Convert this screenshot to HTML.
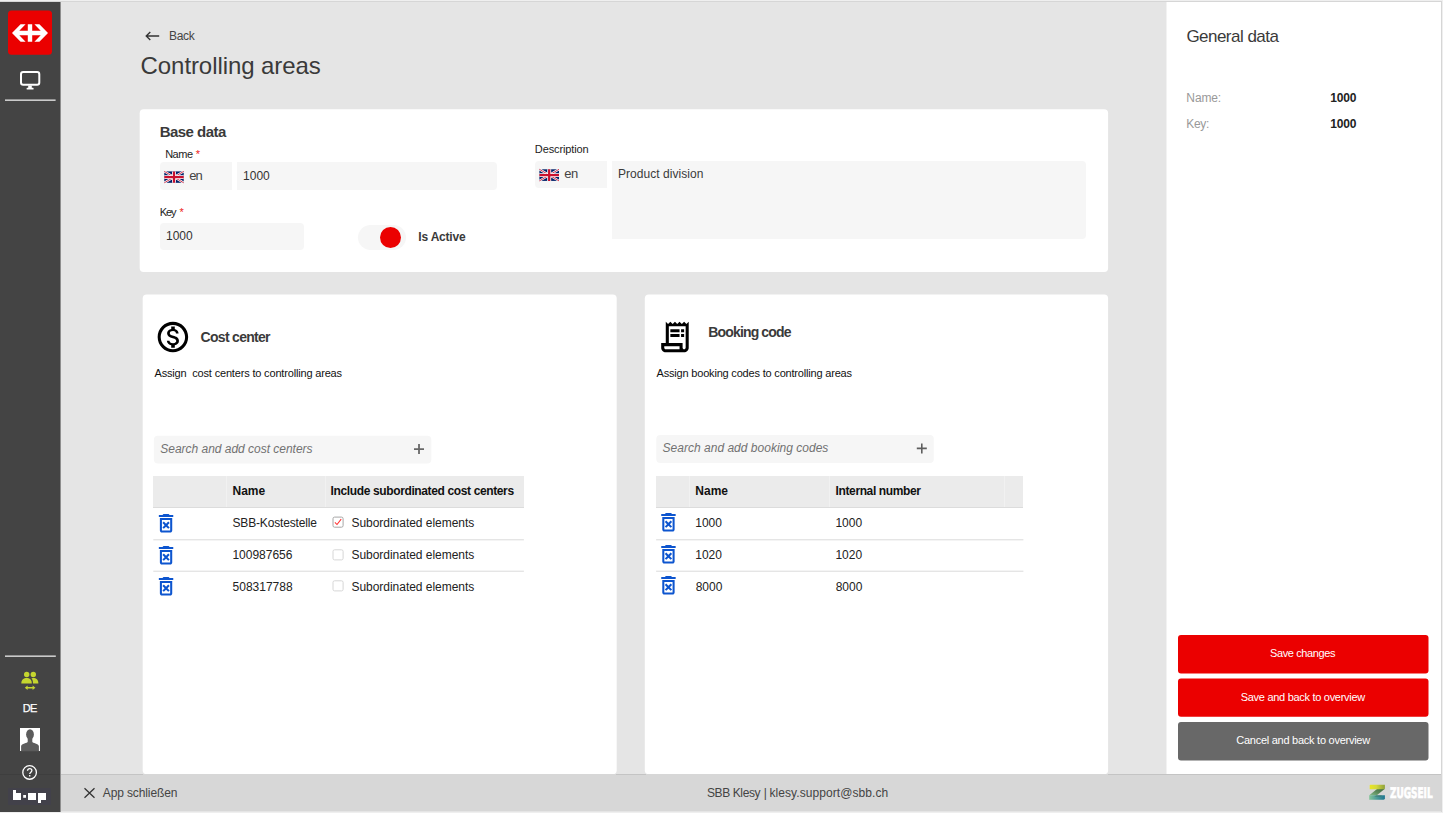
<!DOCTYPE html>
<html lang="en">
<head>
<meta charset="utf-8">
<title>Controlling areas</title>
<style>
*{box-sizing:border-box;margin:0;padding:0}
html,body{width:1443px;height:813px;overflow:hidden;background:#efefef;font-family:"Liberation Sans",sans-serif}
#app{position:absolute;left:0;top:0;width:1443px;height:813px;overflow:hidden}
.a{position:absolute}
.t{position:absolute;white-space:pre;line-height:20px;font-family:"Liberation Sans",sans-serif}
.inp{position:absolute;background:#f6f6f6;border-radius:4px}
.hdr{position:absolute;background:#ebebeb;height:32.2px;top:476.1px;border-bottom:1px solid #dcdcdc}
.sep{position:absolute;width:1px;top:476.1px;height:31px;background:#f1f1f1}
svg{position:absolute;overflow:visible}
</style>
</head>
<body>
<div id="app">
<!-- frame -->
<div class="a" style="left:0;top:1px;width:1442px;height:811px;background:#d6d6d6"></div>
<div class="a" id="main" style="left:0;top:2px;width:1441px;height:810px;background:#e5e5e5"></div>

<!-- sidebar -->
<div class="a" style="left:0;top:2px;width:61px;height:810px;background:#8e8e8e"></div>
<div class="a" style="left:0;top:2px;width:60px;height:810px;background:#444"></div>
<div class="a" style="left:0;top:774px;width:60px;height:1px;background:#3e3e3e"></div>
<svg style="left:0;top:0" width="1443" height="813" viewBox="0 0 1443 813"><svg x="8" y="10" width="44" height="46" viewBox="0 0 44 46">
<rect x="0" y="0.45" width="44" height="44.3" rx="3.5" fill="#eb0000"/>
<path fill="#fff" transform="translate(0,0.75)" d="M4 22.3 L12.6 13.6 H17.6 L11.3 20.1 H19.8 V13.6 H24.2 V20.1 H32.7 L26.4 13.6 H31.4 L40 22.3 L31.4 31 H26.4 L32.7 24.6 H24.2 V31 H19.8 V24.6 H11.3 L17.6 31 H12.6 Z"/>
</svg></svg>
<!-- monitor -->
<svg style="left:0;top:0" width="1443" height="813" viewBox="0 0 1443 813"><svg x="18" y="68" width="24" height="24" viewBox="0 0 24 24">
<rect x="3" y="4" width="18.3" height="12.8" rx="2.2" fill="none" stroke="#fff" stroke-width="2"/>
<rect x="10.2" y="17.5" width="3.6" height="2.6" fill="#fff"/>
<rect x="8.6" y="19.8" width="7" height="1.7" rx=".6" fill="#fff"/>
</svg></svg>

<svg style="left:0;top:0" width="61" height="813" viewBox="0 0 61 813"><rect x="5" y="99.45" width="50.6" height="1.45" fill="#dadada"/><rect x="5" y="655.45" width="50.8" height="1.45" fill="#dadada"/></svg>
<!-- people -->
<svg style="left:0;top:0" width="1443" height="813" viewBox="0 0 1443 813"><svg x="18" y="668" width="24" height="24" viewBox="0 0 24 24" fill="#c5d62f">
<circle cx="8.7" cy="6.5" r="2.7"/><circle cx="15.3" cy="6.5" r="2.7"/>
<path d="M3.3 15.4 C3.3 11.6 5.8 10 8.7 10 C11.6 10 13.8 11.6 13.8 15.4 Z"/>
<path d="M14.6 10.1 C17.8 9.8 20.4 11.6 20.4 15.4 H15 C15 13 14.6 11.4 13.4 10.4 Z"/>
<path d="M6.8 19.7 L9.6 17.4 V19 H14.6 V17.4 L17.4 19.7 L14.6 22 V20.4 H9.6 V22 Z"/>
</svg></svg>
<!-- avatar -->
<div class="a" style="left:19.7px;top:727.8px;width:20.2px;height:23.4px;background:#fff"></div>
<svg style="left:0;top:0" width="1443" height="813" viewBox="0 0 1443 813"><svg x="19.7" y="727.8" width="20.2" height="23.4" viewBox="0 0 20.2 23.4" fill="#5c5c5c">
<ellipse cx="10.3" cy="6.6" rx="3.9" ry="5.2"/>
<path d="M8 10 H12.6 V14 C12.6 15.4 19 15.6 19.2 18.4 V23.4 H1.4 V18.4 C1.6 15.6 8 15.4 8 14 Z"/>
</svg></svg>
<!-- help -->
<svg style="left:0;top:0" width="1443" height="813" viewBox="0 0 1443 813"><svg x="21.6" y="764.45" width="16" height="16" viewBox="0 0 16 16">
<circle cx="8" cy="8" r="6.8" fill="none" stroke="#fff" stroke-width="1.3"/>
<path d="M5.9 6.4 C5.9 4.9 6.9 4.2 8.1 4.2 C9.4 4.2 10.3 5 10.3 6.1 C10.3 7.6 8.2 7.8 8.1 9.6" fill="none" stroke="#fff" stroke-width="1.3"/>
<rect x="7.4" y="10.6" width="1.4" height="1.4" fill="#fff"/>
</svg></svg>
<!-- bap logo -->
<div class="a" style="left:7.5px;top:788px;width:43.5px;height:17px;background:#42414a"></div>
<svg style="left:0;top:773px" width="63" height="40" viewBox="0 0 63 40" fill="#fff">
<path d="M13 17 H16 V20 H21 V27 H13 Z"/>
<rect x="23.2" y="22" width="2.8" height="2.8"/>
<rect x="28" y="20" width="8" height="7"/>
<path d="M38 20 H46 V27 H41 V30 H38 Z"/>
</svg>

<!-- header -->
<svg style="left:0;top:0" width="1443" height="813" viewBox="0 0 1443 813"><svg x="145" y="29" width="16" height="14" viewBox="0 0 16 14">
<path d="M1.2 7 H14.2 M5.3 2.9 L1.2 7 L5.3 11.1" fill="none" stroke="#333" stroke-width="1.35"/>
</svg></svg>

<!-- base data card -->
<svg style="left:0;top:0" width="1443" height="813" viewBox="0 0 1443 813"><rect x="139.7" y="109.3" width="968.4" height="162.6" rx="4" fill="#fff"/><rect x="142.7" y="294.5" width="474" height="479.7" rx="4" fill="#fff"/><rect x="644.8" y="294.5" width="463.3" height="479.7" rx="4" fill="#fff"/></svg>
<div class="inp" style="left:160px;top:162.2px;width:72px;height:28px;border-radius:4px 0 0 4px"></div>
<div class="inp" style="left:237px;top:162.2px;width:259.5px;height:28px;border-radius:0 4px 4px 0"></div>
<div class="inp" style="left:160px;top:222.6px;width:144.3px;height:27.4px"></div>
<div class="inp" style="left:357.8px;top:225px;width:48.2px;height:25px;border-radius:13px"></div>
<div class="a" style="left:379.6px;top:227px;width:21px;height:21px;border-radius:50%;background:#eb0000"></div>
<div class="inp" style="left:535px;top:160.8px;width:72px;height:27.4px;border-radius:4px 0 0 4px"></div>
<div class="inp" style="left:612px;top:160.8px;width:474px;height:78.2px;border-radius:0 4px 4px 0"></div>
<!-- flags -->
<svg style="left:0;top:0" width="1443" height="813" viewBox="0 0 1443 813"><svg x="164.3" y="171.4" width="19.4" height="11.4" viewBox="0 0 60 36" preserveAspectRatio="none">
<rect width="60" height="36" fill="#012169"/>
<path d="M0 0 L60 36 M60 0 L0 36" stroke="#fff" stroke-width="7"/>
<path d="M0 0 L60 36 M60 0 L0 36" stroke="#c8102e" stroke-width="2.6"/>
<path d="M30 0 V36 M0 18 H60" stroke="#fff" stroke-width="12"/>
<path d="M30 0 V36 M0 18 H60" stroke="#c8102e" stroke-width="7"/>
</svg></svg>
<svg style="left:0;top:0" width="1443" height="813" viewBox="0 0 1443 813"><svg x="539.4" y="169.3" width="19.6" height="11.6" viewBox="0 0 60 36" preserveAspectRatio="none">
<rect width="60" height="36" fill="#012169"/>
<path d="M0 0 L60 36 M60 0 L0 36" stroke="#fff" stroke-width="7"/>
<path d="M0 0 L60 36 M60 0 L0 36" stroke="#c8102e" stroke-width="2.6"/>
<path d="M30 0 V36 M0 18 H60" stroke="#fff" stroke-width="12"/>
<path d="M30 0 V36 M0 18 H60" stroke="#c8102e" stroke-width="7"/>
</svg></svg>

<!-- cost center card -->

<svg style="left:0;top:0" width="1443" height="813" viewBox="0 0 1443 813"><svg x="154.6" y="318.8" width="36.6" height="36.6" viewBox="0 0 24 24" fill="#000">
<path d="M12 2C6.48 2 2 6.48 2 12s4.48 10 10 10 10-4.48 10-10S17.52 2 12 2zm0 18c-4.41 0-8-3.59-8-8s3.59-8 8-8 8 3.59 8 8-3.59 8-8 8zm.31-8.860c-1.770-.450-2.340-.940-2.340-1.670 0-.840.790-1.430 2.100-1.430 1.380 0 1.900.660 1.940 1.640h1.710c-.050-1.340-.870-2.570-2.490-2.970V5H10.900v1.690c-1.510.320-2.720 1.300-2.720 2.810 0 1.790 1.490 2.690 3.660 3.210 1.950.460 2.340 1.150 2.340 1.870 0 .530-.390 1.390-2.100 1.390-1.600 0-2.230-.720-2.320-1.640H8.040c.100 1.700 1.360 2.660 2.860 2.970V19h2.340v-1.670c1.520-.290 2.720-1.160 2.730-2.770-.010-2.200-1.900-2.960-3.660-3.420z"/>
</svg></svg>
<svg style="left:0;top:0" width="1443" height="813" viewBox="0 0 1443 813"><rect x="153.9" y="435.7" width="277.4" height="27.7" rx="4" fill="#f6f6f6"/></svg>
<svg style="left:0;top:0" width="1443" height="813" viewBox="0 0 1443 813"><svg x="413.5" y="443.6" width="11" height="11" viewBox="0 0 11 11"><path d="M5.5 0.5 V10.5 M0.5 5.5 H10.5" stroke="#686868" stroke-width="1.8" fill="none"/></svg></svg>
<div class="hdr" style="left:153.3px;width:370.6px"></div>
<div class="sep" style="left:226px"></div><div class="sep" style="left:324.5px"></div>
<svg style="left:0;top:0" width="1443" height="813" viewBox="0 0 1443 813"><svg x="153.7" y="510.83" width="24.7" height="24.7" viewBox="0 0 24 24" fill="#0d55cf"><path d="M14.120 10.470L12 12.590l-2.130-2.120-1.410 1.410L10.590 14l-2.120 2.120 1.410 1.410L12 15.410l2.120 2.120 1.410-1.410L13.410 14l2.120-2.120zM15.500 4l-1-1h-5l-1 1H5v2h14V4zM6 19c0 1.100.9 2 2 2h8c1.100 0 2-.9 2-2V7H6v12zM8 9h8v10H8V9z"/></svg></svg><svg style="left:0;top:0" width="1443" height="813" viewBox="0 0 1443 813"><svg x="153.7" y="542.83" width="24.7" height="24.7" viewBox="0 0 24 24" fill="#0d55cf"><path d="M14.120 10.470L12 12.590l-2.130-2.120-1.410 1.410L10.590 14l-2.120 2.120 1.410 1.410L12 15.410l2.120 2.120 1.410-1.410L13.410 14l2.120-2.120zM15.500 4l-1-1h-5l-1 1H5v2h14V4zM6 19c0 1.100.9 2 2 2h8c1.100 0 2-.9 2-2V7H6v12zM8 9h8v10H8V9z"/></svg></svg><svg style="left:0;top:0" width="1443" height="813" viewBox="0 0 1443 813"><svg x="153.7" y="573.83" width="24.7" height="24.7" viewBox="0 0 24 24" fill="#0d55cf"><path d="M14.120 10.470L12 12.590l-2.130-2.120-1.410 1.410L10.590 14l-2.120 2.120 1.410 1.410L12 15.410l2.120 2.120 1.410-1.410L13.410 14l2.120-2.120zM15.500 4l-1-1h-5l-1 1H5v2h14V4zM6 19c0 1.100.9 2 2 2h8c1.100 0 2-.9 2-2V7H6v12zM8 9h8v10H8V9z"/></svg></svg>
<svg style="left:0;top:0" width="1443" height="813" viewBox="0 0 1443 813">
<rect x="333" y="517.1" width="10.1" height="10.1" rx="1.6" fill="#fff" stroke="#a6a6a6" stroke-width="1"/>
<path d="M334.9 522.3 L337 524.5 L341.2 519.2" fill="none" stroke="#f33" stroke-width="1.05"/>
<rect x="333" y="549.8" width="10.1" height="10.1" rx="1.6" fill="#fff" stroke="#d6d6d6" stroke-width="1"/>
<rect x="333" y="580.8" width="10.1" height="10.1" rx="1.6" fill="#fff" stroke="#d6d6d6" stroke-width="1"/>
</svg>

<!-- booking card -->

<svg style="left:0;top:0" width="1443" height="813" viewBox="0 0 1443 813"><svg x="656.6" y="318.6" width="36.7" height="36.7" viewBox="0 0 24 24" fill="#000">
<path d="M19.500 3.500L18 2l-1.500 1.500L15 2l-1.500 1.500L12 2l-1.500 1.500L9 2 7.500 3.500 6 2v14H3v3c0 1.660 1.340 3 3 3h12c1.660 0 3-1.340 3-3V2l-1.500 1.500zM15 20H6c-.550 0-1-.450-1-1v-1h10v2zm4-1c0 .550-.450 1-1 1s-1-.450-1-1v-3H8V5h11v14z"/>
<path d="M9 7h6v2H9zM16 7h2v2h-2zM9 10h6v2H9zM16 10h2v2h-2z"/>
</svg></svg>
<svg style="left:0;top:0" width="1443" height="813" viewBox="0 0 1443 813"><rect x="656.3" y="434.9" width="277.5" height="28" rx="4" fill="#f6f6f6"/></svg>
<svg style="left:0;top:0" width="1443" height="813" viewBox="0 0 1443 813"><svg x="916.3" y="442.9" width="11" height="11" viewBox="0 0 11 11"><path d="M5.5 0.500 V10.5 M0.5 5.5 H10.5" stroke="#5e5e5e" stroke-width="1.6" fill="none"/></svg></svg>
<div class="hdr" style="left:656.100px;width:367.300px"></div>
<div class="sep" style="left:689px"></div><div class="sep" style="left:829px"></div><div class="sep" style="left:1004px"></div>
<svg style="left:0;top:0" width="1443" height="813" viewBox="0 0 1443 813"><svg x="656.1" y="509.83" width="24.7" height="24.7" viewBox="0 0 24 24" fill="#0d55cf"><path d="M14.120 10.470L12 12.590l-2.130-2.120-1.410 1.410L10.590 14l-2.120 2.120 1.410 1.410L12 15.410l2.120 2.120 1.410-1.410L13.410 14l2.120-2.120zM15.500 4l-1-1h-5l-1 1H5v2h14V4zM6 19c0 1.100.9 2 2 2h8c1.100 0 2-.9 2-2V7H6v12zM8 9h8v10H8V9z"/></svg></svg><svg style="left:0;top:0" width="1443" height="813" viewBox="0 0 1443 813"><svg x="656.1" y="541.83" width="24.7" height="24.7" viewBox="0 0 24 24" fill="#0d55cf"><path d="M14.120 10.470L12 12.590l-2.130-2.120-1.410 1.410L10.590 14l-2.120 2.120 1.410 1.410L12 15.410l2.120 2.120 1.410-1.410L13.410 14l2.120-2.120zM15.500 4l-1-1h-5l-1 1H5v2h14V4zM6 19c0 1.100.9 2 2 2h8c1.100 0 2-.9 2-2V7H6v12zM8 9h8v10H8V9z"/></svg></svg><svg style="left:0;top:0" width="1443" height="813" viewBox="0 0 1443 813"><svg x="656.1" y="572.83" width="24.7" height="24.7" viewBox="0 0 24 24" fill="#0d55cf"><path d="M14.120 10.470L12 12.590l-2.130-2.120-1.410 1.410L10.590 14l-2.120 2.120 1.410 1.410L12 15.410l2.120 2.120 1.410-1.410L13.410 14l2.120-2.120zM15.500 4l-1-1h-5l-1 1H5v2h14V4zM6 19c0 1.100.9 2 2 2h8c1.100 0 2-.9 2-2V7H6v12zM8 9h8v10H8V9z"/></svg></svg>

<!-- right panel -->
<svg style="left:0;top:0" width="1443" height="813" viewBox="0 0 1443 813"><rect x="1166.5" y="2" width="274.5" height="772" fill="#fff"/></svg>
<svg style="left:0;top:0" width="1443" height="813" viewBox="0 0 1443 813">
<rect x="153.3" y="539.3" width="370.6" height="1" fill="#dadada"/><rect x="153.3" y="570.7" width="370.6" height="1" fill="#dadada"/>
<rect x="656.1" y="539.3" width="367.3" height="1" fill="#dadada"/><rect x="656.1" y="570.7" width="367.3" height="1" fill="#dadada"/>
<rect x="1178" y="635" width="250.5" height="38.5" rx="3" fill="#eb0000"/>
<rect x="1178" y="678.6" width="250.5" height="38.2" rx="3" fill="#eb0000"/>
<rect x="1178" y="722" width="250.5" height="38.5" rx="3" fill="#686868"/>
</svg>

<!-- footer -->
<div class="a" style="left:61px;top:774px;width:1380px;height:37px;background:#d7d7d7"></div>
<div class="a" style="left:61px;top:774px;width:82px;height:1px;background:#c4c4c4"></div><div class="a" style="left:616px;top:774px;width:30px;height:1px;background:#c4c4c4"></div><div class="a" style="left:1108px;top:774px;width:333px;height:1px;background:#c4c4c4"></div>
<svg style="left:0;top:0" width="1443" height="813" viewBox="0 0 1443 813"><svg x="84" y="788" width="11" height="10" viewBox="0 0 11 10"><path d="M0.500 0.300 L10.500 9.700 M10.500 0.300 L0.500 9.700" stroke="#333" stroke-width="1.300" fill="none"/></svg></svg>
<!-- zugseil -->
<svg style="left:0;top:0" width="1443" height="813" viewBox="0 0 1443 813"><svg x="1369" y="784.5" width="17" height="16" viewBox="0 0 17 16">
<defs>
<linearGradient id="zg1" x1="0" y1="0" x2="1" y2="0"><stop offset="0" stop-color="#ebe624"/><stop offset=".45" stop-color="#d3d83a"/><stop offset="1" stop-color="#8ea03c"/></linearGradient>
<linearGradient id="zg2" x1="1" y1="0" x2="0" y2="1"><stop offset="0" stop-color="#3f6a44"/><stop offset=".5" stop-color="#5c8a5a"/><stop offset="1" stop-color="#86bc8e"/></linearGradient>
<linearGradient id="zg3" x1="0" y1="0" x2="1" y2="0"><stop offset="0" stop-color="#84c49a"/><stop offset=".5" stop-color="#4a9a98"/><stop offset="1" stop-color="#1e7590"/></linearGradient>
</defs>
<path d="M0.300 10.800 L8 4.500 H15.600 L7.600 11 Z" fill="url(#zg2)"/>
<path d="M1.300 0.300 H15.900 V4.100 Q15.900 4.700 15.200 4.700 H0.700 V1 Q0.700 0.300 1.300 0.300 Z" fill="url(#zg1)"/>
<path d="M0.200 10.800 H15.900 V14 Q15.600 15.300 14.300 15.300 H0.200 Z" fill="url(#zg3)"/>
<path d="M5.300 12.200 L7.600 10.800 H13 L12 12.200 Z" fill="#3d6f68" opacity=".55"/>
</svg></svg>
<svg id="zug" style="left:0;top:0" width="1443" height="813" viewBox="0 0 1443 813"><text transform="translate(1389.9,797.6) rotate(0.03) scale(0.498,0.735)" font-family="DejaVu Sans Condensed, DejaVu Sans, sans-serif" font-stretch="condensed" font-weight="700" font-size="20" fill="#fff" stroke="#fff" stroke-width=".9">ZUGSEIL</text></svg>

<span class="t" style="left:169px;top:26px;font-size:12px;color:#444;letter-spacing:-0.323px;">Back</span>
<span class="t" style="left:140.6px;top:56px;font-size:24px;color:#3a3a3a;letter-spacing:-0.082px;">Controlling areas</span>
<span class="t" style="left:159.69px;top:122px;font-size:15px;color:#3a3a3a;font-weight:700;letter-spacing:-0.528px;">Base data</span>
<span class="t" style="left:165.19px;top:144px;font-size:11px;color:#222;letter-spacing:-0.512px;">Name</span>
<span class="t" style="left:195.79px;top:144px;font-size:11px;color:#ee2222;">*</span>
<span class="t" style="left:189.14px;top:166px;font-size:13px;color:#444;letter-spacing:-0.954px;">en</span>
<span class="t" style="left:242.97px;top:166px;font-size:12px;color:#333;letter-spacing:0.03px;">1000</span>
<span class="t" style="left:159.64px;top:202px;font-size:11px;color:#222;letter-spacing:-0.989px;">Key</span>
<span class="t" style="left:179.4px;top:202px;font-size:11px;color:#ee2222;">*</span>
<span class="t" style="left:165.97px;top:226px;font-size:12px;color:#333;letter-spacing:0.024px;">1000</span>
<span class="t" style="left:418.37px;top:227px;font-size:12px;color:#3a3a3a;font-weight:700;letter-spacing:-0.204px;">Is Active</span>
<span class="t" style="left:534.83px;top:139px;font-size:11px;color:#222;letter-spacing:-0.117px;">Description</span>
<span class="t" style="left:564.14px;top:164px;font-size:13px;color:#444;letter-spacing:-0.454px;">en</span>
<span class="t" style="left:617.91px;top:164px;font-size:12px;color:#3a3a3a;letter-spacing:0.055px;">Product division</span>
<span class="t" style="left:200.62px;top:327px;font-size:14px;color:#3a3a3a;font-weight:700;letter-spacing:-0.71px;">Cost center</span>
<span class="t" style="left:154.52px;top:363px;font-size:11px;color:#111;letter-spacing:-0.172px;">Assign  cost centers to controlling areas</span>
<span class="t" style="left:160.24px;top:439px;font-size:12px;color:#727272;font-style:italic;letter-spacing:-0.016px;">Search and add cost centers</span>
<span class="t" style="left:232.54px;top:481px;font-size:12px;color:#111;font-weight:700;">Name</span>
<span class="t" style="left:330.57px;top:481px;font-size:12px;color:#111;font-weight:700;letter-spacing:-0.37px;">Include subordinated cost centers</span>
<span class="t" style="left:232.48px;top:513px;font-size:12px;color:#222;letter-spacing:-0.16px;">SBB-Kostestelle</span>
<span class="t" style="left:351.43px;top:513px;font-size:12px;color:#222;letter-spacing:-0.027px;">Subordinated elements</span>
<span class="t" style="left:232.41px;top:545px;font-size:12px;color:#222;">100987656</span>
<span class="t" style="left:351.43px;top:545px;font-size:12px;color:#222;letter-spacing:-0.027px;">Subordinated elements</span>
<span class="t" style="left:232.58px;top:577px;font-size:12px;color:#222;">508317788</span>
<span class="t" style="left:351.43px;top:577px;font-size:12px;color:#222;letter-spacing:-0.027px;">Subordinated elements</span>
<span class="t" style="left:708.37px;top:322px;font-size:14px;color:#3a3a3a;font-weight:700;letter-spacing:-0.862px;">Booking code</span>
<span class="t" style="left:656.52px;top:363px;font-size:11px;color:#111;letter-spacing:-0.187px;">Assign booking codes to controlling areas</span>
<span class="t" style="left:662.6px;top:438px;font-size:12px;color:#727272;font-style:italic;letter-spacing:0.011px;">Search and add booking codes</span>
<span class="t" style="left:695.37px;top:481px;font-size:12px;color:#111;font-weight:700;">Name</span>
<span class="t" style="left:835.57px;top:481px;font-size:12px;color:#111;font-weight:700;letter-spacing:-0.379px;">Internal number</span>
<span class="t" style="left:695.27px;top:513px;font-size:12px;color:#222;">1000</span>
<span class="t" style="left:835.41px;top:513px;font-size:12px;color:#222;">1000</span>
<span class="t" style="left:695.27px;top:545px;font-size:12px;color:#222;">1020</span>
<span class="t" style="left:835.41px;top:545px;font-size:12px;color:#222;">1020</span>
<span class="t" style="left:695.64px;top:577px;font-size:12px;color:#222;">8000</span>
<span class="t" style="left:835.67px;top:577px;font-size:12px;color:#222;">8000</span>
<span class="t" style="left:1186.39px;top:27px;font-size:17px;color:#3a3a3a;letter-spacing:-0.522px;">General data</span>
<span class="t" style="left:1186.37px;top:88px;font-size:12px;color:#999;letter-spacing:-0.128px;">Name:</span>
<span class="t" style="left:1330.29px;top:88px;font-size:12px;color:#222;font-weight:700;letter-spacing:-0.144px;">1000</span>
<span class="t" style="left:1186.34px;top:114px;font-size:12px;color:#999;letter-spacing:-0.375px;">Key:</span>
<span class="t" style="left:1330.29px;top:114px;font-size:12px;color:#222;font-weight:700;letter-spacing:-0.144px;">1000</span>
<span class="t" style="left:1269.94px;top:643px;font-size:11px;color:#fff;letter-spacing:-0.38px;">Save changes</span>
<span class="t" style="left:1240.75px;top:687px;font-size:11px;color:#fff;letter-spacing:-0.293px;">Save and back to overview</span>
<span class="t" style="left:1236.27px;top:730px;font-size:11px;color:#fff;letter-spacing:-0.26px;">Cancel and back to overview</span>
<span class="t" style="left:102.74px;top:783px;font-size:12px;color:#444;letter-spacing:-0.113px;">App schließen</span>
<span class="t" style="left:707.03px;top:783px;font-size:12px;color:#444;letter-spacing:-0.401px;">SBB Klesy</span>
<span class="t" style="left:763.8px;top:783px;font-size:12px;color:#444;">|</span>
<span class="t" style="left:769.51px;top:783px;font-size:12px;color:#444;letter-spacing:0.069px;">klesy.support@sbb.ch</span>
<span class="t" style="left:22.83px;top:698px;font-size:11px;color:#fff;letter-spacing:-0.819px;-webkit-text-stroke:.25px #fff;">DE</span>
</div>
</body>
</html>
